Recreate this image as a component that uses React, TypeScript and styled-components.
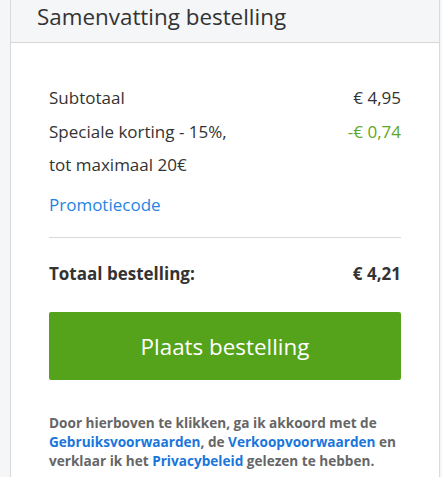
import React from "react";
import styled, { createGlobalStyle } from "styled-components";

const Global = createGlobalStyle`
  html, body { margin: 0; padding: 0; background: #f5f6f8; }
  body { font-family: "Open Sans", "Noto Sans", sans-serif; color: #333; }
`;

const Page = styled.div`
  display: flex;
  padding: 0 2px 0 10px;
  min-height: 477px;
  box-sizing: border-box;
`;

const Card = styled.section`
  flex: 1;
  border-left: 1px solid #dadada;
  border-right: 1px solid #dadada;
  background: #fff;
`;

const Header = styled.header`
  height: 43px;
  box-sizing: border-box;
  background: #f5f6f8;
  border-bottom: 1px solid #d6d6d6;
  padding: 0 26px;
  display: flex;
  align-items: flex-start;
`;

const Title = styled.h2`
  margin: 0;
  font-weight: 400;
  font-size: 22.4px;
  line-height: 34px;
  color: #333;
`;

const Body = styled.div`
  padding: 38px 38px 0 38px;
`;

const Row = styled.div`
  display: flex;
  justify-content: space-between;
  align-items: flex-start;
  font-size: 17px;
  line-height: 33.5px;
`;

const Label = styled.span<{ $bold?: boolean }>`
  font-weight: ${(p) => (p.$bold ? 700 : 400)};
  color: #333;
`;

const Value = styled.span<{ $green?: boolean; $bold?: boolean }>`
  color: ${(p) => (p.$green ? "#62a724" : "#333")};
  font-weight: ${(p) => (p.$bold ? 700 : 400)};
  white-space: nowrap;
`;

const Promo = styled.a`
  display: block;
  margin-top: 6px;
  font-size: 17px;
  line-height: 34px;
  color: #2585e2;
  text-decoration: none;
`;

const Divider = styled.hr`
  border: none;
  border-top: 1px solid #d9d9d9;
  margin: 15px 0 19px;
`;

const Button = styled.button`
  display: block;
  width: 100%;
  height: 68px;
  margin-top: 22px;
  border: none;
  border-radius: 2px;
  background: #54a31a;
  color: #fff;
  font-family: "Open Sans", "Noto Sans", sans-serif;
  font-size: 22.4px;
  font-weight: 400;
`;

const Terms = styled.p`
  margin: 33px -4px 0 0;
  font-size: 13.6px;
  font-weight: 700;
  line-height: 19px;
  color: #666;
`;

const TermsLink = styled.a`
  color: #1a76db;
  text-decoration: none;
`;

export default function App() {
  return (
    <>
      <Global />
      <Page>
        <Card>
          <Header>
            <Title>Samenvatting bestelling</Title>
          </Header>
          <Body>
            <Row>
              <Label>Subtotaal</Label>
              <Value>€ 4,95</Value>
            </Row>
            <Row>
              <Label>
                Speciale korting - 15%,
                <br />
                tot maximaal 20€
              </Label>
              <Value $green>-€ 0,74</Value>
            </Row>
            <Promo href="#">Promotiecode</Promo>
            <Divider />
            <Row>
              <Label $bold>Totaal bestelling:</Label>
              <Value $bold>€ 4,21</Value>
            </Row>
            <Button>Plaats bestelling</Button>
            <Terms>
              Door hierboven te klikken, ga ik akkoord met de{" "}
              <TermsLink href="#">Gebruiksvoorwaarden</TermsLink>, de{" "}
              <TermsLink href="#">Verkoopvoorwaarden</TermsLink> en verklaar ik het{" "}
              <TermsLink href="#">Privacybeleid</TermsLink> gelezen te hebben.
            </Terms>
          </Body>
        </Card>
      </Page>
    </>
  );
}
